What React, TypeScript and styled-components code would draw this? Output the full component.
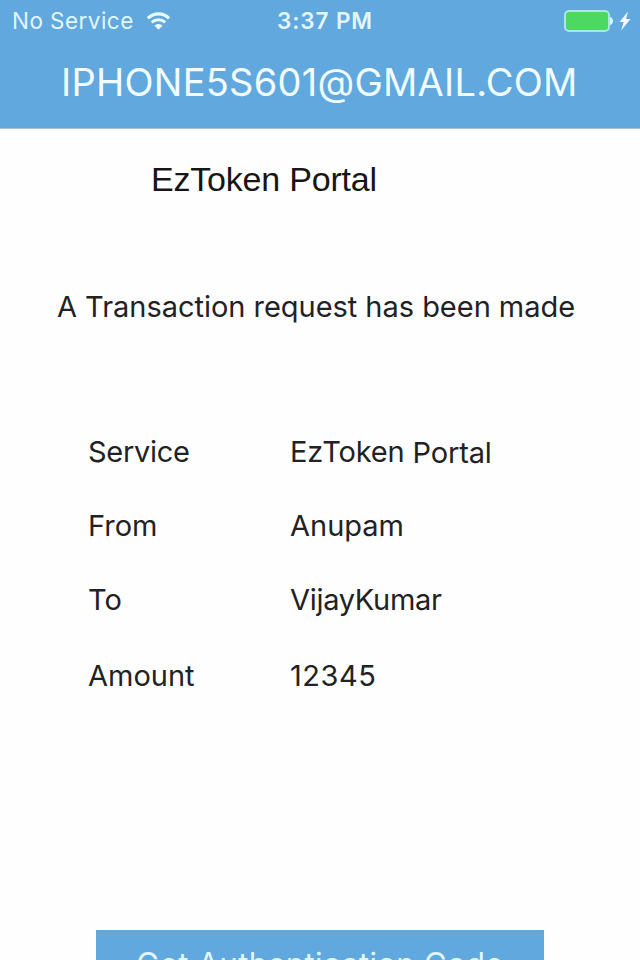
import React from "react";
import styled, { createGlobalStyle } from "styled-components";

const GlobalStyle = createGlobalStyle`
  *, *::before, *::after { box-sizing: border-box; }
  body { margin: 0; background: #fefefe; }
`;

const Screen = styled.div`
  width: 640px;
  height: 960px;
  overflow: hidden;
  display: flex;
  flex-direction: column;
  background: #fefefe;
  color: #222224;
  font-family: Inter, "Liberation Sans", sans-serif;
  white-space: nowrap;
`;

const Header = styled.header`
  height: 129px;
  flex: none;
  background: #60a8dd;
  border-bottom: 1px solid #a9bfd3;
  color: #f0fcff;
`;

const StatusBar = styled.div`
  height: 42px;
  padding: 0 9px 0 12px;
  display: grid;
  grid-template-columns: 265px 1fr auto;
  align-items: center;
  font-size: 22.5px;
  line-height: 42px;
  color: #e2f6fc;
`;

const Carrier = styled.div`
  display: flex;
  align-items: center;
  gap: 12px;
  letter-spacing: 0.45px;
`;

const Clock = styled.div`
  font-weight: 600;
  letter-spacing: 0.9px;
`;

const Power = styled.div`
  display: flex;
  align-items: center;
  gap: 5px;
`;

const Account = styled.h1`
  margin: 0;
  padding-left: 61px;
  font-size: 38px;
  font-weight: 400;
  line-height: 81px;
  letter-spacing: 0.25px;
`;

const Title = styled.h2`
  margin: 29px 0 0 151px;
  font-family: "Liberation Sans", Arial, sans-serif;
  font-size: 34px;
  font-weight: 400;
  line-height: 42px;
  letter-spacing: -0.2px;
  color: #161616;
`;

const Message = styled.p`
  margin: 87px 0 0 57px;
  font-size: 29px;
  line-height: 40px;
  letter-spacing: -0.03px;
`;

const Details = styled.dl`
  margin: 105px 0 0 88px;
  display: grid;
  grid-template-columns: 202px 1fr;
  grid-template-rows: 74px 74px 76px 40px;
  font-size: 29px;
  line-height: 40px;
`;

const Label = styled.dt<{ $spacing?: number }>`
  margin: 0;
  letter-spacing: ${({ $spacing = 0 }) => $spacing}px;
`;

const Value = styled.dd<{ $spacing?: number }>`
  margin: 0;
  letter-spacing: ${({ $spacing = 0 }) => $spacing}px;
`;

const LoweredWord = styled.span`
  display: inline-block;
  transform: translateY(1px);
`;

const CodeButton = styled.button`
  width: 448px;
  height: 88px;
  flex: none;
  margin: 234px 0 0 96px;
  padding: 0;
  border: 0;
  background: #60a8dd;
  color: #e2f6fc;
  font: 400 31px/68px Inter, sans-serif;
  letter-spacing: 0.35px;
  display: flex;
  justify-content: center;
`;

const WifiIcon = () => (
  <svg width="25" height="20" viewBox="0 0 26 20" fill="none" stroke="#e8faff">
    <path d="M2 7.2C8.2 1.2 17.8 1.2 24 7.2" strokeWidth="3.4" />
    <path d="M6 11.4C10 7.8 16 7.8 20 11.4" strokeWidth="3" />
    <path d="M13 19L8.8 15C11.3 12.6 14.7 12.6 17.2 15Z" fill="#e8faff" stroke="none" />
  </svg>
);

const BatteryIcon = () => (
  <svg width="50" height="22" viewBox="0 0 50 22">
    <rect x="1" y="1" width="44" height="20" rx="4" fill="#4bd964" stroke="#a9e6e8" strokeWidth="2" />
    <path d="M46 7C50 8 50 14 46 15Z" fill="#d4f5fa" />
  </svg>
);

const BoltIcon = () => (
  <svg width="12" height="20" viewBox="0 0 12 20">
    <path d="M9 0.5L0.5 11H4.6L2.2 19.5L11.6 8H7Z" fill="#f2faff" />
  </svg>
);

const details = [
  { label: "From", value: "Anupam", spacing: 0 },
  { label: "To", value: "VijayKumar", spacing: -0.3 },
  { label: "Amount", value: "12345", spacing: 0.5 },
];

export default function App() {
  return (
    <Screen>
      <GlobalStyle />
      <Header>
        <StatusBar>
          <Carrier>
            No Service
            <WifiIcon />
          </Carrier>
          <Clock>3:37 PM</Clock>
          <Power>
            <BatteryIcon />
            <BoltIcon />
          </Power>
        </StatusBar>
        <Account>IPHONE5S601@GMAIL.COM</Account>
      </Header>
      <Title>EzToken Portal</Title>
      <Message>A Transaction request has been made</Message>
      <Details>
        <Label $spacing={-0.3}>Service</Label>
        <Value $spacing={-0.15}>
          EzToken <LoweredWord>Portal</LoweredWord>
        </Value>
        {details.map(({ label, value, spacing }) => (
          <React.Fragment key={label}>
            <Label>{label}</Label>
            <Value $spacing={spacing}>{value}</Value>
          </React.Fragment>
        ))}
      </Details>
      <CodeButton>Get Authentication Code</CodeButton>
    </Screen>
  );
}
